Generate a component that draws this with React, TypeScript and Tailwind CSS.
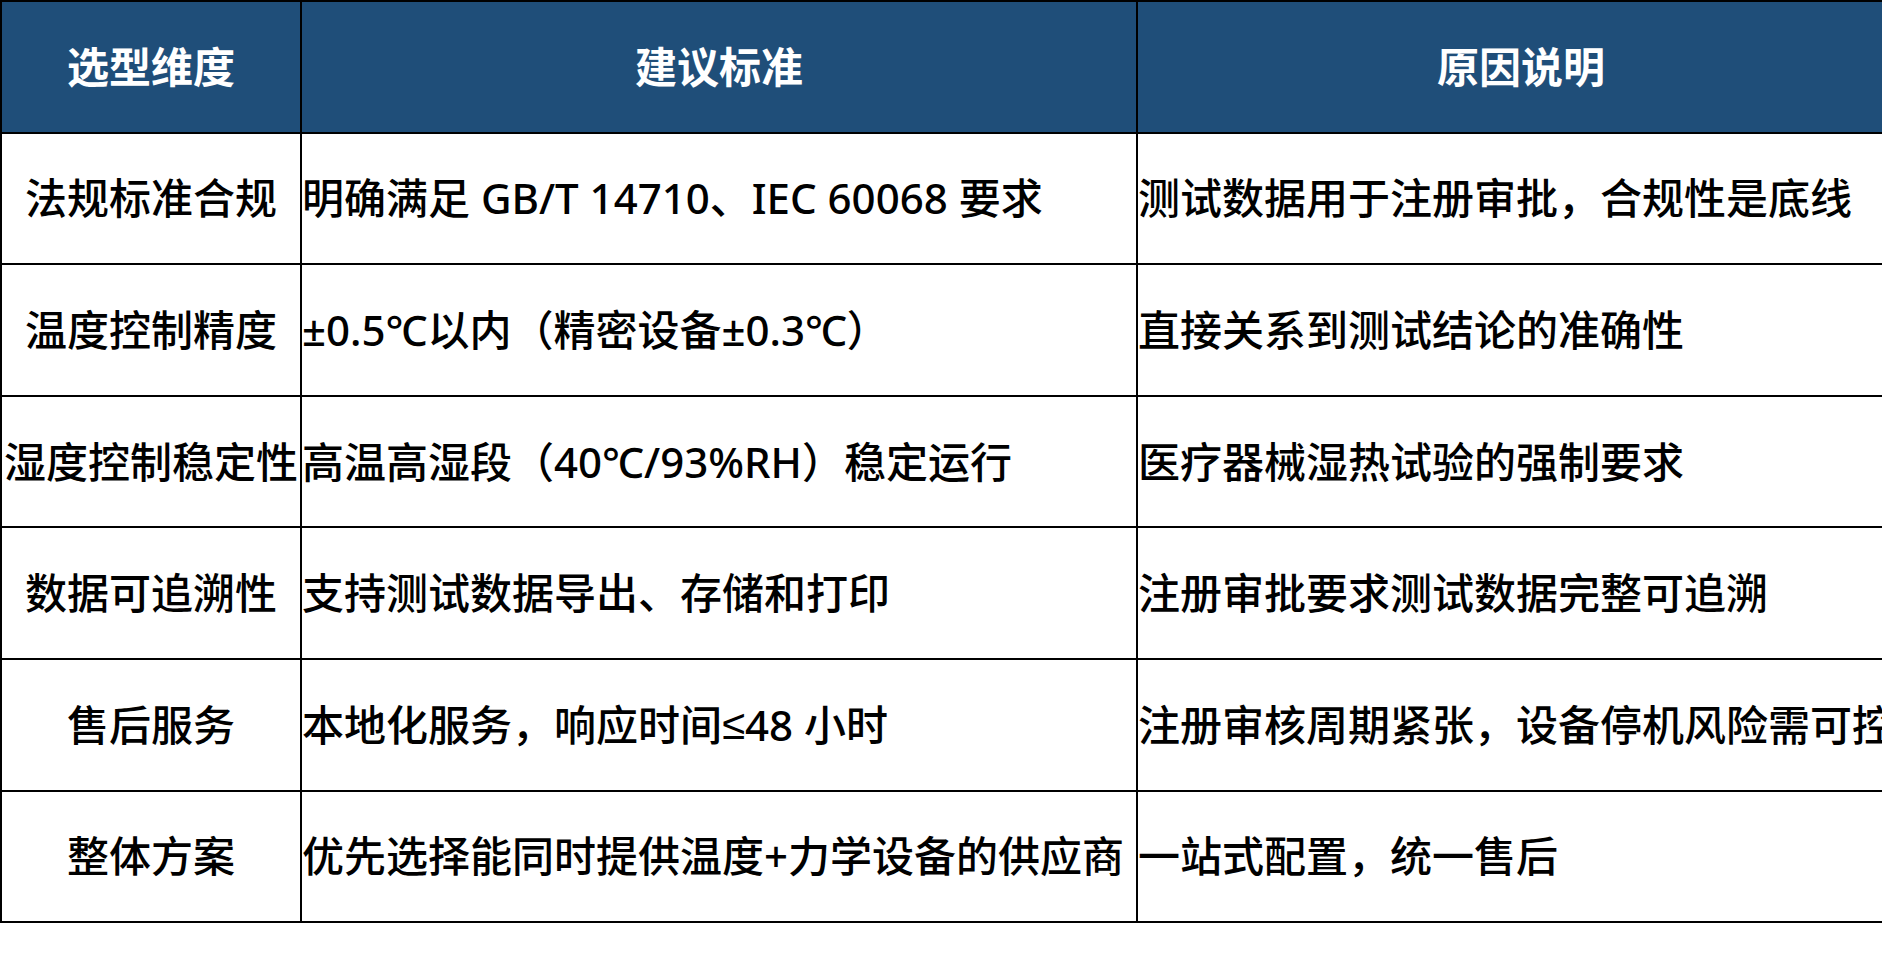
import React from "react";

const le = <span style={{ fontFamily: '"Liberation Sans", "DejaVu Sans", sans-serif' }}>≤</span>;

const rows: [React.ReactNode, React.ReactNode, React.ReactNode][] = [
  ["法规标准合规", "明确满足 GB/T 14710、IEC 60068 要求", "测试数据用于注册审批，合规性是底线"],
  ["温度控制精度", "±0.5℃以内（精密设备±0.3℃）", "直接关系到测试结论的准确性"],
  ["湿度控制稳定性", "高温高湿段（40℃/93%RH）稳定运行", "医疗器械湿热试验的强制要求"],
  ["数据可追溯性", "支持测试数据导出、存储和打印", "注册审批要求测试数据完整可追溯"],
  ["售后服务", <>本地化服务，响应时间{le}48 小时</>, "注册审核周期紧张，设备停机风险需可控"],
  ["整体方案", "优先选择能同时提供温度+力学设备的供应商", "一站式配置，统一售后"],
];

const font = { fontFamily: '"Noto Sans", "Noto Sans CJK SC", sans-serif' };

export default function App() {
  return (
    <div className="w-screen h-[978px] overflow-hidden bg-white" style={font}>
      <div className="w-[1904px] border-t-2 border-l-2 border-black grid grid-cols-[300px_836px_768px]">
        {["选型维度", "建议标准", "原因说明"].map((h) => (
          <div
            key={h}
            className="h-[131.6px] bg-[#1f4e79] border-r-2 border-b-2 border-black flex items-center justify-center text-white font-bold text-[42px] leading-none whitespace-nowrap"
          >
            {h}
          </div>
        ))}
        {rows.map((r, i) => (
          <React.Fragment key={i}>
            <div className="h-[131.6px] border-r-2 border-b-2 border-black flex items-center justify-center text-black font-medium text-[42px] leading-none whitespace-nowrap overflow-hidden">
              {r[0]}
            </div>
            <div className="h-[131.6px] border-r-2 border-b-2 border-black flex items-center justify-start text-black font-medium text-[42px] leading-none whitespace-nowrap overflow-hidden">
              {r[1]}
            </div>
            <div className="h-[131.6px] border-r-2 border-b-2 border-black flex items-center justify-start text-black font-medium text-[42px] leading-none whitespace-nowrap overflow-hidden">
              {r[2]}
            </div>
          </React.Fragment>
        ))}
      </div>
    </div>
  );
}
